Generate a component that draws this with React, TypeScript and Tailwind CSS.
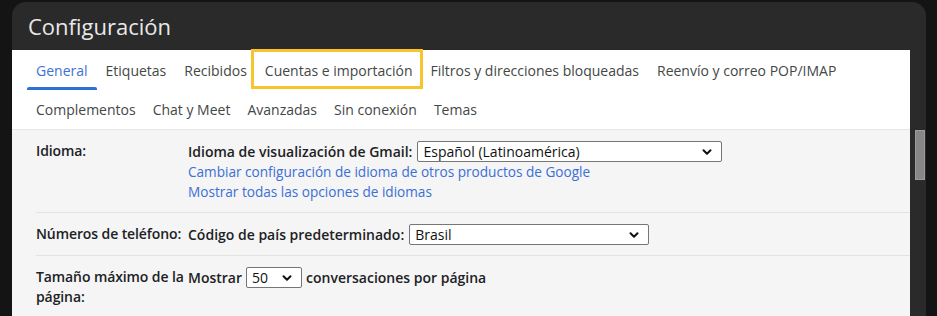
import { ReactNode } from "react";

const tabsTop = [
  { label: "General", active: true },
  { label: "Etiquetas" },
  { label: "Recibidos" },
  { label: "Cuentas e importación", marked: true },
  { label: "Filtros y direcciones bloqueadas" },
  { label: "Reenvío y correo POP/IMAP" },
];

const tabsBottom = ["Complementos", "Chat y Meet", "Avanzadas", "Sin conexión", "Temas"];

function Chevron() {
  return (
    <svg width="12" height="12" viewBox="0 0 12 12" className="shrink-0">
      <path d="M2.5 4.2 6 7.7 9.5 4.2" fill="none" stroke="#111" strokeWidth="2" strokeLinecap="round" strokeLinejoin="round" />
    </svg>
  );
}

function FakeSelect({ value, width }: { value: string; width: string }) {
  return (
    <div
      className={`inline-flex h-[21px] items-center justify-between rounded-[2px] border border-[#767676] bg-white pl-[5px] pr-[8px] text-[14px] text-[#111] ${width}`}
    >
      <span>{value}</span>
      <Chevron />
    </div>
  );
}

function Row({ label, children, last }: { label: ReactNode; children: ReactNode; last?: boolean }) {
  return (
    <div className={`ml-[24px] flex pt-[11px] pb-[10px] ${last ? "" : "border-b border-[#e3e3e3]"}`}>
      <div className="w-[152px] shrink-0 text-[14px] leading-[20px] font-semibold tracking-[-0.1px] text-[#202124]">{label}</div>
      <div className="flex-1 text-[14px] leading-[20px]">{children}</div>
    </div>
  );
}

export default function App() {
  return (
    <div className="h-[316px] w-[937px] overflow-hidden bg-[#141414] pt-[2px] font-[family-name:'Open_Sans',Roboto,sans-serif]">
      <div className="ml-[12px] w-[914px] rounded-t-[14px] bg-[#2a2a2a]">
        <div className="flex h-[48px] items-center pl-[16px] text-[22px] text-[#e8e8e8]">Configuración</div>
        <div className="flex">
          <div className="w-[898px]">
            <div className="bg-white pl-[15px]">
              <div className="flex h-[40px] text-[14px] text-[#444746]">
                {tabsTop.map((t) => (
                  <div
                    key={t.label}
                    className={`relative flex items-center px-[9px] ${t.active ? "text-[#3b71d7]" : ""}`}
                  >
                    {t.label}
                    {t.active && <span className="absolute right-0 bottom-0 left-0 h-[3px] rounded-t-[2px] bg-[#2f6fd6]" />}
                    {t.marked && (
                      <span className="absolute top-[-1px] right-[-2px] bottom-[1px] left-[-5px] border-[3px] border-[#f7c52b]" />
                    )}
                  </div>
                ))}
              </div>
              <div className="flex h-[39px] items-center pl-[0.5px] text-[14px] text-[#444746]">
                {tabsBottom.map((t) => (
                  <div key={t} className="px-[8.5px]">
                    {t}
                  </div>
                ))}
              </div>
            </div>
            <div className="border-t border-[#e6e6e6] bg-[#f5f5f5]">
              <Row label="Idioma:">
                <div className="flex items-center">
                  <span className="mr-[5px] font-semibold text-[#202124]">Idioma de visualización de Gmail:</span>
                  <FakeSelect value="Español (Latinoamérica)" width="w-[305px]" />
                </div>
                <div className="text-[13.6px] text-[#3a6fd6]">Cambiar configuración de idioma de otros productos de Google</div>
                <div className="text-[13.6px] text-[#3a6fd6]">Mostrar todas las opciones de idiomas</div>
              </Row>
              <Row label="Números de teléfono:">
                <div className="flex items-center">
                  <span className="mr-[5px] font-semibold text-[#202124]">Código de país predeterminado:</span>
                  <FakeSelect value="Brasil" width="w-[240px]" />
                </div>
              </Row>
              <Row label="Tamaño máximo de la página:" last>
                <div className="flex items-center">
                  <span className="mr-[4px] font-semibold text-[#202124]">Mostrar</span>
                  <FakeSelect value="50" width="w-[56px]" />
                  <span className="ml-[4px] font-semibold text-[#202124]">conversaciones por página</span>
                </div>
                <div className="h-[40px]" />
              </Row>
            </div>
          </div>
          <div className="w-[16px] shrink-0">
            <div className="mt-[80px] ml-[5px] h-[50px] w-[10px] border border-[#9c9c9c] bg-[#878787]" />
          </div>
        </div>
      </div>
    </div>
  );
}
